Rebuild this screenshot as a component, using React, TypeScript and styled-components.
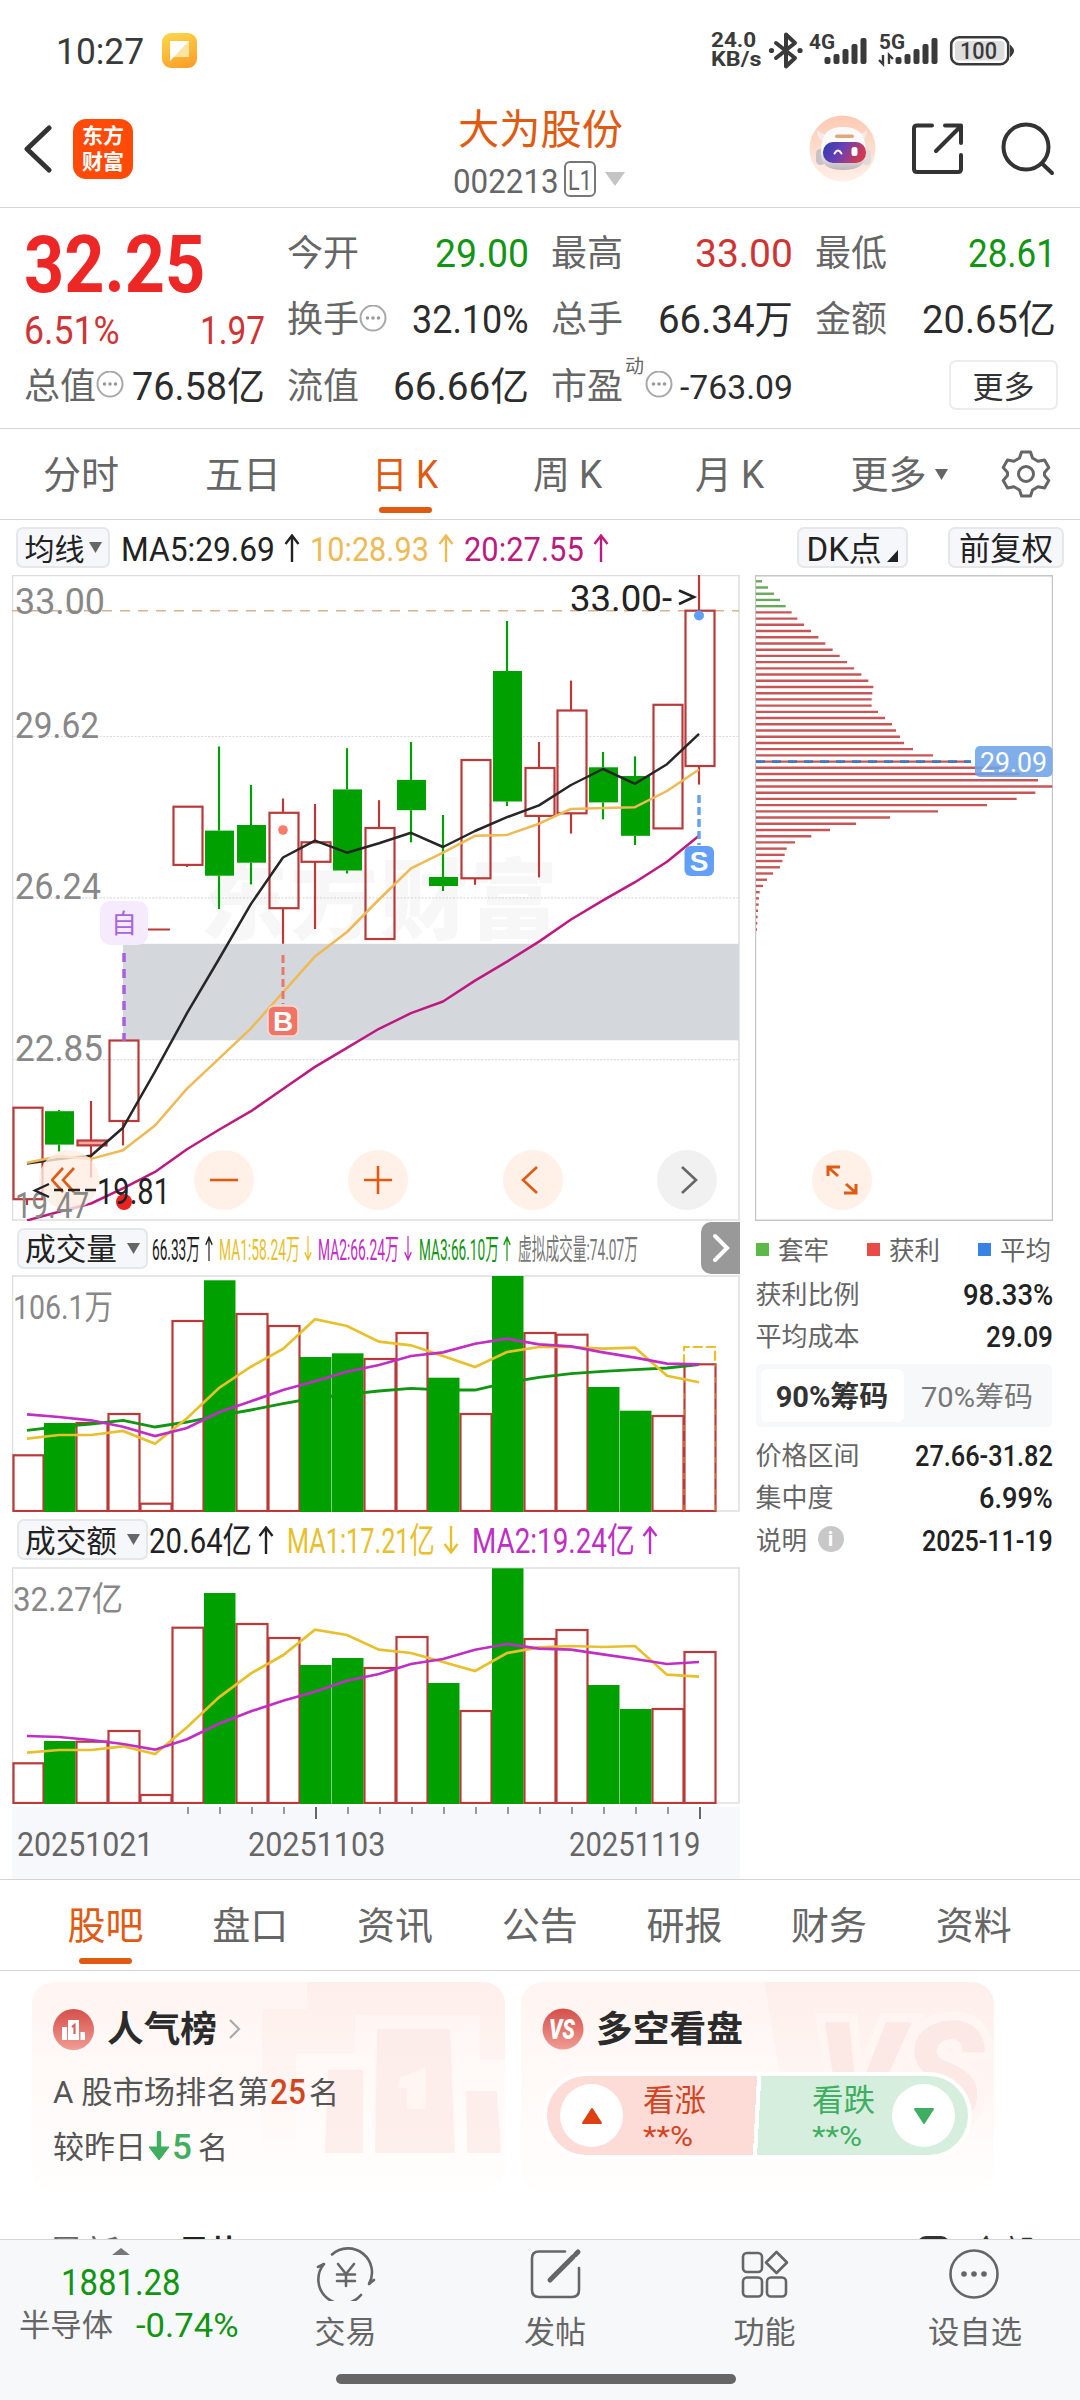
import React, { useLayoutEffect, useRef, useState } from "react";
import styled, { createGlobalStyle } from "styled-components";

const FONT = `Roboto, "Noto Sans CJK SC", sans-serif`;
const C = {
  orange: "#e05a12",
  red: "#cf3434",
  green: "#129512",
  ink: "#2c2c2c",
  grey: "#666",
  line: "#d3d4d6",
  chip: "#f6f7fa",
  candleRed: "#b93a38",
  candleGreen: "#00a000",
  ma5: "#262626",
  ma10: "#efb954",
  ma20: "#bd1a80",
  yellow: "#e8c02c",
  purple: "#c02fc4",
};

const Global = createGlobalStyle`
  html, body { margin: 0; padding: 0; background: #fff; }
  * { box-sizing: border-box; }
  button { font-family: inherit; border: 0; background: none; padding: 0; margin: 0; }
  svg { display: block; flex: none; }
`;

/* ---------- fitted text ---------- */
type TextProps = { $s: number; $c?: string; $b?: number; $ml?: number };
const FitBox = styled.span<TextProps>`
  display: inline-block;
  flex: none;
  overflow: visible;
  white-space: nowrap;
  line-height: 1.2;
  font-size: ${(p) => p.$s}px;
  color: ${(p) => p.$c || "inherit"};
  font-weight: ${(p) => p.$b || 400};
  margin-left: ${(p) => p.$ml || 0}px;
  transform: translateY(1.5px);
`;
const FitInner = styled.span`
  display: inline-block;
  transform-origin: 0 50%;
`;
function Fit({ w, s, c, b, ml, children }: { w: number; s: number; c?: string; b?: number; ml?: number; children: React.ReactNode }) {
  const ref = useRef<HTMLSpanElement>(null);
  const [k, setK] = useState(1);
  useLayoutEffect(() => {
    if (ref.current) setK(w / ref.current.offsetWidth);
  }, [w]);
  return (
    <FitBox $s={s} $c={c} $b={b} $ml={ml} style={{ width: w }}>
      <FitInner ref={ref} style={{ transform: `scaleX(${k})` }}>{children}</FitInner>
    </FitBox>
  );
}

/* ---------- page ---------- */
const Page = styled.div`
  width: 1080px;
  height: 2400px;
  display: flex;
  flex-direction: column;
  overflow: hidden;
  background: #fff;
  font-family: ${FONT};
  color: ${C.ink};
`;

/* ---------- status bar ---------- */
const StatusBar = styled.div`
  height: 97px;
  flex: none;
  display: flex;
  align-items: center;
  padding: 3px 63px 0 56px;
`;
const Spacer = styled.div`flex: 1;`;
const NoteIcon = styled.div`
  width: 35px;
  height: 35px;
  margin-left: 18px;
  border-radius: 9px;
  background: linear-gradient(160deg, #fbd94c, #fb9a26);
`;
const NetSpeed = styled.div`
  display: flex;
  flex-direction: column;
  height: 38px;
  > span { line-height: 19px; transform: none; }
`;

function StatusIcons() {
  return (
    <svg width="250" height="46" viewBox="768 26 250 46" fontFamily={FONT} fontWeight="700" fill="#3a3a3a">
      <path d="M777 42l19 15-9 8.500V33.500l9 8.500-19 15" fill="none" stroke="#3a3a3a" strokeWidth="4" strokeLinejoin="round" strokeLinecap="round" />
      <circle cx="772.500" cy="49.500" r="2.600" /><circle cx="801" cy="49.500" r="2.600" />
      <text x="810" y="48" fontSize="20" textLength="26" lengthAdjust="spacingAndGlyphs">4G</text>
      <text x="880" y="48" fontSize="20" textLength="26" lengthAdjust="spacingAndGlyphs">5G</text>
      {[825, 895].map((x, n) => (
        <g key={x}>
          {[7, 10, 15, 20, 26].map((h, i) => (
            <rect key={i} x={x + i * 9 + (n ? 1.5 : 0.5)} y={63 - h} width="6" height={h} rx="2" />
          ))}
        </g>
      ))}
      <path d="M884 54v9l-4-4M890 63v-9l4 4" fill="none" stroke="#3a3a3a" strokeWidth="2.400" />
      <rect x="952.200" y="36.200" width="57" height="27" rx="8" fill="#fff" stroke="#3a3a3a" strokeWidth="2.600" />
      <rect x="956" y="40" width="49.500" height="19.500" rx="4" fill="#dedede" />
      <path d="M1012 46q4 4 0 8z" stroke="#3a3a3a" strokeWidth="2" />
      <text x="961" y="58" fontSize="23" fontWeight="500" textLength="37" lengthAdjust="spacingAndGlyphs">100</text>
    </svg>
  );
}

/* ---------- header ---------- */
const Header = styled.header`
  height: 111px;
  flex: none;
  display: grid;
  grid-template-columns: 1fr 240px 1fr;
  border-bottom: 1.5px solid ${C.line};
`;
const HeaderSide = styled.div<{ $end?: boolean }>`
  display: flex;
  align-items: center;
  height: 102px;
  justify-content: ${(p) => (p.$end ? "flex-end" : "flex-start")};
  padding: ${(p) => (p.$end ? "1px 25px 0 0" : "1px 0 0 22px")};
`;
const BrandLogo = styled.div`
  width: 60px;
  height: 60px;
  margin-left: 21px;
  border-radius: 13px;
  background: #ff4a08;
  color: #fff;
  display: flex;
  flex-direction: column;
  align-items: center;
  justify-content: center;
  font: 700 21px/26px ${FONT};
`;
const TitleBlock = styled.div`
  display: flex;
  flex-direction: column;
  align-items: center;
  padding-top: 7px;
`;
const CodeRow = styled.div`
  display: flex;
  align-items: center;
  height: 38px;
  margin-top: 7px;
  margin-right: 2px;
`;
const LevelTag = styled.span`
  width: 32px;
  height: 36px;
  margin: 0 9px 0 5px;
  border: 2px solid #777;
  border-radius: 6px;
  display: flex;
  align-items: center;
  justify-content: center;
  color: #666;
`;

function Robot() {
  return (
    <svg width="67" height="67" viewBox="0 0 67 67">
      <defs>
        <linearGradient id="rb" x1="0" y1="0" x2="0" y2="1"><stop offset="0" stopColor="#fdc9b2" /><stop offset="1" stopColor="#fff0e8" /></linearGradient>
        <linearGradient id="rf" x1="0" y1="0" x2="1" y2=".3"><stop offset="0" stopColor="#2b3bb0" /><stop offset=".5" stopColor="#6a3fb4" /><stop offset="1" stopColor="#d23a52" /></linearGradient>
        <linearGradient id="rw" x1="0" y1="0" x2="0" y2="1"><stop offset=".5" stopColor="#fafafa" /><stop offset="1" stopColor="#bdb6ba" /></linearGradient>
      </defs>
      <circle cx="33.500" cy="33.500" r="33" fill="url(#rb)" />
      <path d="M8 15c0 6 2 10 8 12l6-8c-6 1-11-1-14-4zM58 15c0 6-2 10-7 12l-6-8c6 1 10-1 13-4z" fill="#f6e9e6" />
      <rect x="7" y="34" width="9" height="16" rx="4.500" fill="#c9c3c6" /><rect x="53" y="34" width="9" height="16" rx="4.500" fill="#e0dada" />
      <path d="M12 38C12 18 20 12 34 12s23 6 23 26c0 12-8 17-23 17s-22-5-22-17z" fill="url(#rw)" />
      <rect x="26" y="19.500" width="19" height="3.600" rx="1.800" fill="#e0a878" />
      <rect x="14" y="27" width="43" height="21" rx="10" fill="url(#rf)" />
      <path d="M25.500 38.500q3.500-6 7 0" fill="none" stroke="#fff" strokeWidth="2" strokeLinecap="round" />
      <rect x="42.500" y="32" width="6" height="9" rx="2.500" fill="#fff" />
    </svg>
  );
}

/* ---------- quote ---------- */
const Quote = styled.section`
  height: 221px;
  flex: none;
  display: grid;
  grid-template-columns: 241px 242px 242px 241px;
  column-gap: 22px;
  padding: 11px 0 0 24px;
  border-bottom: 1.5px solid ${C.line};
`;
const QuoteCol = styled.div`
  display: flex;
  flex-direction: column;
`;
const QuoteRow = styled.div<{ $h?: number }>`
  height: ${(p) => p.$h || 66.500}px;
  display: flex;
  align-items: center;
  justify-content: space-between;
`;
const QuoteCell = styled.div`
  display: flex;
  align-items: center;
`;
const PriceRow = styled.div`
  height: 88px;
  display: flex;
  align-items: center;
`;
const Sup = styled.span`
  align-self: flex-start;
  margin: -7px 1px 0 2px;
  height: 20px;
  line-height: 20px;
  font-size: 19px;
  color: ${C.grey};
`;
const MoreButton = styled.button`
  width: 109px;
  height: 50px;
  margin-left: auto;
  margin-right: -2px;
  border: 2px solid #ececec;
  border-radius: 7px;
  display: flex;
  align-items: center;
  justify-content: center;
`;
const Dots = () => (
  <svg width="28" height="28" viewBox="0 0 28 28">
    <circle cx="14" cy="13" r="12.500" fill="none" stroke="#a8a8a8" strokeWidth="2" />
    <g fill="#999"><circle cx="8.500" cy="13" r="1.800" /><circle cx="14" cy="13" r="1.800" /><circle cx="19.500" cy="13" r="1.800" /></g>
  </svg>
);

/* ---------- period tabs ---------- */
const PeriodTabs = styled.nav`
  height: 91px;
  flex: none;
  display: flex;
  align-items: center;
  border-bottom: 1.5px solid ${C.line};
  color: ${C.grey};
`;
const Tab = styled.button<{ $w: number; $on?: boolean }>`
  width: ${(p) => p.$w}px;
  flex: none;
  height: 100%;
  display: flex;
  align-items: center;
  justify-content: center;
  position: relative;
  color: ${(p) => (p.$on ? C.orange : C.grey)};
  &::after {
    content: "";
    display: ${(p) => (p.$on ? "block" : "none")};
    position: absolute;
    left: calc(50% - 26.5px);
    bottom: 6px;
    width: 53px;
    height: 6px;
    border-radius: 3px;
    background: ${C.orange};
  }
`;

/* ---------- indicators ---------- */
const IndicatorRow = styled.div<{ $h: number; $pl: number; $w?: number }>`
  width: ${(p) => (p.$w ? p.$w + "px" : "auto")};
  height: ${(p) => p.$h}px;
  flex: none;
  display: flex;
  align-items: center;
  padding-left: ${(p) => p.$pl}px;
  padding-right: 16px;
`;
const Chip = styled.button<{ $w: number }>`
  width: ${(p) => p.$w}px;
  height: 41px;
  flex: none;
  display: flex;
  align-items: center;
  justify-content: center;
  gap: 4px;
  border: 2px solid #e6e7ea;
  border-radius: 7px;
  background: ${C.chip};
  color: #222;
`;
const ChipGap = styled.span<{ $w: number }>`width: ${(p) => p.$w}px; flex: none;`;
const Tri = ({ w, h, c = "#666", up }: { w: number; h: number; c?: string; up?: boolean }) => (
  <svg width={w} height={h} viewBox="0 0 10 10" preserveAspectRatio="none"><path d={up ? "M5 0L10 10H0z" : "M0 0H10L5 10z"} fill={c} /></svg>
);
const ArrowBox = styled.span<{ $ml: number }>`margin-left: ${(p) => p.$ml}px; flex: none;`;
const Arrow = ({ c, down, w = 16, ml = 9, h = 28 }: { c: string; down?: boolean; w?: number; ml?: number; h?: number }) => (
  <ArrowBox $ml={ml}>
    <svg width={w} height={h} viewBox="0 0 16 28" preserveAspectRatio="none">
      <path d={down ? "M8 0V27M1.500 18L8 26.500 14.500 18" : "M8 28V1.500M1.500 10L8 1.500 14.500 10"} fill="none" stroke={c} strokeWidth="2.400" />
    </svg>
  </ArrowBox>
);

/* ---------- charts ---------- */
const ChartArea = styled.section`
  height: 1304px;
  flex: none;
  display: grid;
  grid-template-columns: 728px 298px;
  column-gap: 14.500px;
  padding-left: 12px;
`;
const ChartCol = styled.div`
  display: flex;
  flex-direction: column;
`;
const ChartFrame = styled.div`
  position: relative;
  height: 646px;
  flex: none;
`;
const ZoomBar = styled.div`
  position: absolute;
  left: 27px;
  top: 575px;
  display: flex;
  gap: 94.500px;
`;
const RoundButton = styled.button<{ $mute?: boolean }>`
  width: 60px;
  height: 60px;
  border-radius: 50%;
  display: flex;
  align-items: center;
  justify-content: center;
  background: ${(p) => (p.$mute ? "rgba(238,238,238,.85)" : "rgba(255,236,226,.8)")};
`;
const ExpandSlot = styled.div`
  position: absolute;
  left: 57px;
  top: 575px;
`;
const NextPane = styled.button`
  margin-left: auto;
  margin-right: -16px;
  width: 39px;
  height: 52px;
  flex: none;
  border-radius: 10px 0 0 10px;
  background: #999;
  display: flex;
  align-items: center;
  justify-content: center;
`;
const Axis = styled.div`
  margin-top: 3px;
  height: 72px;
  background: #f7f8fb;
`;

const X = (i: number) => 27 + 32 * i;
const pts = (ys: number[]) => ys.map((y, i) => `${X(i)},${y}`).join(" ");

type Candle = [string, number, number, number?, number?];
const candles: Candle[] = [
  ["r", 1107.700, 1199.200, 0, 1205], ["g", 1111.200, 1144.600, 1110, 1151.500], ["r", 1140.500, 1145.400, 1101, 1177.500],
  ["r", 1040.500, 1121, 0, 1145.400], ["r", 929, 929.500], ["r", 806.700, 864.900, 0, 867],
  ["g", 830.600, 875.700, 746.500, 909], ["g", 825, 862.700, 785, 884.400], ["r", 812.800, 908.200, 798.500, 943.800],
  ["r", 842.300, 861.800, 804, 929], ["g", 789.400, 870.500, 748.200, 873.500], ["r", 828, 939, 800.200],
  ["g", 779.900, 810.200, 742, 842.300], ["g", 877, 886, 815, 891], ["r", 760, 878.300, 0, 884.800],
  ["g", 671, 801.500, 621, 806], ["r", 768, 815.900, 742, 877.400], ["r", 710.500, 813.300, 680.600, 833.600],
  ["g", 767.300, 802.400, 752, 819.300], ["g", 776, 835.800, 756.400, 845], ["r", 704.800, 828.400], ["r", 610.700, 766, 575, 784.600],
];
const ma5 = [1163.600, 1158.900, 1155.800, 1127.700, 1071.700, 1013.200, 959, 903.900, 857.500, 840.600, 852.700, 843.200, 832.800, 847, 831, 817.200, 805.400, 785, 769, 783.800, 764.200, 733.900];
const ma10 = [1162.800, 1156.300, 1158.900, 1150.200, 1125.500, 1088.600, 1058.700, 1028.300, 992.300, 956.400, 932, 899.500, 868.300, 852.700, 835.800, 834.900, 823.700, 808.900, 808, 807.200, 791, 769.500];
const ma20 = [1220.400, 1211.800, 1203.500, 1188.400, 1171.900, 1149.300, 1129.800, 1111.200, 1089, 1066.900, 1047.900, 1028.800, 1013.200, 1001.500, 980.600, 961.600, 941.600, 919.500, 900.400, 882.200, 861.800, 835.800];
const falling = new Set([1, 6, 9, 10, 13, 15, 18, 19]);
const volTop = [1455.300, 1423, 1423, 1414, 1503.700, 1321, 1280.300, 1314, 1326, 1357, 1353.300, 1359, 1333, 1377.700, 1414, 1276, 1333, 1334.700, 1387, 1410.700, 1416, 1364.300];
const volY = [1438.700, 1435, 1435, 1431, 1443.700, 1418.300, 1388, 1366.700, 1349, 1319.300, 1326, 1341.700, 1345.300, 1356, 1367, 1352, 1347, 1347, 1348.700, 1347.700, 1375.700, 1382.300];
const volP = [1414.300, 1417, 1420.300, 1426.700, 1436, 1428, 1412.300, 1401.300, 1390, 1381.300, 1371.700, 1365, 1356, 1352.300, 1343.700, 1338.700, 1344.300, 1346.300, 1352.300, 1357.700, 1363.700, 1364.300];
const volG = [1430.300, 1426.700, 1424, 1420.300, 1427, 1422, 1415.700, 1410, 1403.700, 1398, 1394.300, 1391, 1388.300, 1390, 1390, 1382.700, 1377.300, 1373.700, 1371.300, 1369.700, 1368, 1364.700];
const amtTop = [1763.300, 1741, 1741.700, 1731, 1795, 1627.700, 1593, 1624, 1638, 1665, 1658, 1668, 1637, 1683, 1711, 1568.300, 1639, 1630, 1685, 1709, 1709, 1652];
const amtY = [1752.700, 1750, 1750, 1746.300, 1754, 1727.300, 1697.300, 1673.300, 1655.300, 1629.700, 1635, 1649.700, 1653, 1662, 1671, 1653, 1647.300, 1646, 1647, 1646, 1674.700, 1676.700];
const amtP = [1736, 1737, 1740, 1744, 1749.700, 1739.300, 1723.700, 1711.300, 1700.700, 1691.700, 1680.700, 1674, 1664, 1659, 1649.700, 1644, 1648.700, 1649.700, 1654.300, 1659, 1664, 1662];

function CandleChart() {
  const label = (t: string, y: number, w: number) => (
    <text key={t} x="15" y={y} fontSize="37" fill="#888" textLength={w} lengthAdjust="spacingAndGlyphs">{t}</text>
  );
  return (
    <svg width="728" height="646" viewBox="12 575 728 646" fontFamily={FONT}>
      <rect x="12.500" y="575.500" width="726.500" height="644.500" fill="none" stroke="#dedede" strokeWidth="1.500" />
      <text x="200" y="932" fontSize="88" fontWeight="900" fill="#f7f7f7" textLength="358">东方财富</text>
      {[736.500, 897.800, 1059.600].map((y) => <path key={y} d={`M12 ${y}H739`} stroke="#dcdcdc" strokeWidth="1.200" strokeDasharray="2 1.500" />)}
      <rect x="123" y="943.800" width="616" height="96.500" fill="#d4d7db" />
      <path d="M12 610.700H739" stroke="#d9b48a" strokeWidth="1.600" strokeDasharray="10 8" />
      {label("33.00", 613.5, 90)}{label("29.62", 737.5, 84)}{label("26.24", 898.5, 86)}{label("22.85", 1060.5, 88)}
      {candles.map(([k, t, b, hi, lo], i) => {
        const c = k === "g" ? C.candleGreen : C.candleRed;
        if (i === 4) return <path key={i} d="M141 929.500H170" stroke={c} strokeWidth="2" />;
        return (
          <g key={i} stroke={c} strokeWidth="2.200">
            {hi ? <path d={`M${X(i)} ${hi}V${t}`} /> : null}
            {lo ? <path d={`M${X(i)} ${b}V${lo}`} /> : null}
            {k === "g" ? <rect x={X(i) - 14} y={t} width="29" height={b - t} fill={c} stroke="none" /> : <rect x={X(i) - 13.500} y={t} width="29" height={b - t} fill={i === 2 ? "#f3a59f" : "none"} />}
          </g>
        );
      })}
      <g fill="none" strokeWidth="2.500" strokeLinejoin="round">
        <polyline points={pts(ma5)} stroke={C.ma5} />
        <polyline points={pts(ma10)} stroke={C.ma10} />
        <polyline points={pts(ma20)} stroke={C.ma20} />
      </g>
      <text x="570" y="611" fontSize="37" fill="#222" textLength="102" lengthAdjust="spacingAndGlyphs">33.00-</text>
      <path d="M679 581.500L694 588 679 595" transform="translate(0 9)" fill="none" stroke="#222" strokeWidth="2.600" />
      <path d="M124 953V1041" stroke="#a65fe0" strokeWidth="3.500" strokeDasharray="9 7" />
      <rect x="100" y="901" width="48" height="44" rx="10" fill="#f5ebfd" />
      <text x="111" y="933" fontSize="26" fill="#a866dc">自</text>
      <path d="M283 955V1004" stroke="#e5776d" strokeWidth="3" strokeDasharray="8 4" />
      <circle cx="283" cy="830" r="4.800" fill="#f97c6c" />
      <rect x="268" y="1006" width="30" height="30" rx="6" fill="#ef7567" stroke="#ffd8d0" strokeWidth="1.500" />
      <text x="283" y="1031" fontSize="28" fontFamily='"Liberation Sans", sans-serif' fontWeight="700" fill="#fff" textAnchor="middle">B</text>
      <path d="M699 795V845" stroke="#68a2ec" strokeWidth="3.500" strokeDasharray="8 4" />
      <circle cx="699" cy="615.500" r="5" fill="#5f9ff5" />
      <rect x="684.500" y="846" width="29.500" height="30" rx="6" fill="#62a0f7" />
      <text x="699" y="871" fontSize="28" fontFamily='"Liberation Sans", sans-serif' fontWeight="700" fill="#fff" textAnchor="middle">S</text>
      <circle cx="124" cy="1202" r="8" fill="#ea2222" />
    </svg>
  );
}
const LowMark = () => (
  <svg width="160" height="50" viewBox="12 1170 160 50" fontFamily={FONT}>
    <text x="15" y="1217.500" fontSize="37" fill="#888" textLength="74" lengthAdjust="spacingAndGlyphs">19.47</text>
    <path d="M49 1184L35 1190.500 49 1197M54 1190H63M68 1190H80M85 1190H96" fill="none" stroke="#222" strokeWidth="2.400" />
    <text x="97" y="1203.500" fontSize="36" fill="#222" textLength="73" lengthAdjust="spacingAndGlyphs">19.81</text>
  </svg>
);
const LowSlot = styled.div`
  position: absolute;
  left: 0;
  top: 595px;
`;

function BarChart({ top, tops, base, label, lw, lines, ghost }: { top: number; tops: number[]; base: number; label: string; lw: number; lines: [string, number[]][]; ghost?: number }) {
  return (
    <svg width="728" height="237" viewBox={`12 ${top} 728 237`} fontFamily={FONT}>
      <rect x="12.500" y={top + 1} width="726.500" height="235" fill="none" stroke="#dedede" strokeWidth="1.500" />
      <text x="13" y={top + 44} fontSize="34" fill="#888" textLength={lw} lengthAdjust="spacingAndGlyphs">{label}</text>
      {ghost ? <path d={`M684 ${tops[21]}V${ghost}H715V${tops[21]}`} fill="none" stroke={C.yellow} strokeWidth="2.200" strokeDasharray="10 3" /> : null}
      {tops.map((t, i) =>
        falling.has(i) ? null : (
          <rect key={i} x={X(i) - (i ? 14.5 : 13.5)} y={t} width={i ? 31 : 30} height={base - t} fill="#fff" stroke={C.candleRed} strokeWidth="2.200" />
        )
      )}
      {ghost ? <path d={`M684 ${base}V${tops[21]}M715 ${base}V${tops[21]}`} stroke={C.yellow} strokeWidth="2" strokeDasharray="6 10" opacity=".35" /> : null}
      {lines.filter((l) => l[0] === C.green).map(([c, ys]) => <polyline key={c} points={pts(ys)} fill="none" stroke={c} strokeWidth="2.800" />)}
      {tops.map((t, i) => (falling.has(i) ? <rect key={i} x={X(i) - 15} y={t} width="31.500" height={base - t + 1} fill={C.candleGreen} /> : null))}
      {lines.filter((l) => l[0] !== C.green).map(([c, ys]) => <polyline key={c} points={pts(ys)} fill="none" stroke={c} strokeWidth="2.700" />)}
    </svg>
  );
}

const chipEnds = [66, 84, 102, 120, 137, 155, 172, 192, 213, 235, 256, 278, 299, 321, 342, 364, 385, 400, 397, 395, 395, 414, 435, 456, 468, 480, 492, 519, 579, 693, 783, 838, 894, 937, 886, 830, 741, 594, 450, 348, 270, 214, 165, 140, 134, 127, 120, 99, 81, 69, 59, 57, 56, 54, 53, 52, 51];
function ChipProfile() {
  return (
    <svg width="298" height="646" viewBox="755 575 298 646" fontFamily={FONT}>
      <rect x="755.500" y="575.800" width="297" height="644.500" fill="none" stroke="#c6c6c6" strokeWidth="1.500" />
      {chipEnds.map((e, i) => (
        <path key={i} d={`M756 ${581.300 + i * 6.217}H${740 + e / 3}`} stroke={i < 5 ? "#67a85a" : "#c95656"} strokeWidth="2.400" />
      ))}
      <path d="M756 761.600H971" stroke="#3f7ac0" strokeWidth="2.600" strokeDasharray="9 7" />
      <rect x="975" y="746" width="77.500" height="31" rx="5" fill="#6ea3e8" fillOpacity=".88" />
      <text x="980" y="771.500" fontSize="27" fill="#fff" textLength="67" lengthAdjust="spacingAndGlyphs">29.09</text>
    </svg>
  );
}

const DateLabels = styled.div`
  display: flex;
  color: ${C.grey};
`;

/* ---------- chip info ---------- */
const Legend = styled.div`
  height: 51px;
  display: flex;
  align-items: center;
  justify-content: space-between;
  padding: 6px 2px 0 1px;
`;
const LegendItem = styled.div<{ $c: string }>`
  display: flex;
  align-items: center;
  gap: 9px;
  &::before { content: ""; width: 13px; height: 13px; background: ${(p) => p.$c}; }
`;
const InfoRow = styled.div`
  height: 42.500px;
  display: flex;
  align-items: center;
  padding-left: 1px;
`;
const InfoBadge = styled.span`
  width: 26px;
  height: 26px;
  margin-left: 11px;
  border-radius: 50%;
  background: #c8c8c8;
  color: #fff;
  font: 700 21px/26px ${FONT};
  text-align: center;
`;
const Segment = styled.div`
  margin: 7px 0 6px 1px;
  height: 63px;
  width: 296px;
  padding: 5px;
  border-radius: 5px;
  background: #f7f8fa;
  display: grid;
  grid-template-columns: 143px 143px;
`;
const SegmentItem = styled.button<{ $on?: boolean }>`
  border-radius: 6px;
  background: ${(p) => (p.$on ? "#fff" : "transparent")};
  color: ${(p) => (p.$on ? "#333" : "#777")};
  display: flex;
  align-items: center;
  justify-content: center;
`;
const Info = ({ l, lw, v, vw, badge }: { l: string; lw: number; v: string; vw: number; badge?: boolean }) => (
  <InfoRow>
    <Fit w={lw} s={26} c={C.grey}>{l}</Fit>
    {badge ? <InfoBadge>i</InfoBadge> : null}
    <Spacer />
    <Fit w={vw} s={29} b={500} c="#222">{v}</Fit>
  </InfoRow>
);

/* ---------- sections below ---------- */
const SectionTabs = styled.nav`
  height: 92px;
  flex: none;
  display: flex;
  align-items: center;
  padding-left: 33px;
  border-top: 1.5px solid ${C.line};
  border-bottom: 1.5px solid ${C.line};
`;
const Cards = styled.section`
  flex: none;
  display: flex;
  gap: 16px;
  padding: 11px 0 0 32px;
`;
const Card = styled.article`
  position: relative;
  width: 473px;
  height: 210px;
  border-radius: 22px;
  overflow: hidden;
  background: linear-gradient(#fff5f2, #fffaf8 50%, #fffefd);
  padding: 26px 0 0 21px;
`;
const Watermark = styled.div`
  position: absolute;
  right: 0;
  top: 0;
`;
const CardHead = styled.div`
  position: relative;
  height: 42px;
  display: flex;
  align-items: center;
`;
const CardLine = styled.div<{ $mt: number }>`
  position: relative;
  height: 42px;
  margin-top: ${(p) => p.$mt}px;
  display: flex;
  align-items: center;
  color: #555;
`;
const VotePill = styled.div`
  position: relative;
  width: 429px;
  height: 87px;
  margin: 22px 0 0 1px;
  border: 4px solid #fff;
  border-radius: 44px;
  overflow: hidden;
  background: linear-gradient(93deg, #fddcd8 0 49.4%, #fff 49.4% 50.4%, #d6eedd 50.4%);
  display: flex;
  align-items: center;
  padding: 0 13px;
`;
const VoteDot = styled.div`
  width: 63px;
  height: 63px;
  flex: none;
  border-radius: 50%;
  background: #fff;
  display: flex;
  align-items: center;
  justify-content: center;
`;
const VoteText = styled.div<{ $ml: number; $c: string }>`
  margin-left: ${(p) => p.$ml}px;
  color: ${(p) => p.$c};
  display: flex;
  flex-direction: column;
  gap: 2px;
`;
const Feed = styled.div`
  margin-top: auto;
  height: 8px;
  flex: none;
  overflow: hidden;
  display: flex;
  align-items: flex-start;
  padding-left: 48px;
`;
const FeedIcon = styled.div`
  margin: 5px 20px 0 auto;
  width: 33px;
  height: 33px;
  border: 4px solid #333;
  border-radius: 9px;
  background: #333;
`;
const FeedText = styled.div<{ $r?: number }>`
  display: flex;
  flex: none;
  padding-right: ${(p) => p.$r || 0}px;
`;

const BottomBar = styled.footer`
  height: 161px;
  flex: none;
  display: grid;
  grid-template-rows: 123px 1fr;
  background: #f7f8fa;
  border-top: 1.5px solid ${C.line};
`;
const BottomItems = styled.div`
  display: grid;
  grid-template-columns: 242px 207px 212px 207px 212px;
`;
const IndexCell = styled.div`
  display: flex;
  flex-direction: column;
  align-items: center;
  padding-top: 8px;
`;
const IndexValue = styled.div`
  display: flex;
  margin-top: 4px;
`;
const IndexLine = styled.div`
  display: flex;
  align-items: center;
  width: 242px;
  padding-left: 19px;
`;
const NavItem = styled.button`
  display: flex;
  flex-direction: column;
  align-items: center;
  padding-top: 7px;
  gap: 11px;
`;
const HomeIndicator = styled.div`
  width: 400px;
  height: 10px;
  margin: 11px 0 0 336px;
  border-radius: 5px;
  background: #666;
`;
const g = { fill: "none", stroke: "#666", strokeWidth: 2.600, strokeLinecap: "round" as const, strokeLinejoin: "round" as const };

export default function App() {
  return (
    <>
      <Global />
      <Page>
        <StatusBar>
          <Fit w={88} s={37} c="#3a3a3a">10:27</Fit>
          <NoteIcon><svg width="35" height="35" viewBox="0 0 35 35"><path d="M8 8h19v16H8z" fill="#fbe3a0" /><path d="M8 8h19L8 28z" fill="#fff" /></svg></NoteIcon>
          <Spacer />
          <NetSpeed>
            <Fit w={45} s={21} b={700} c="#3a3a3a">24.0</Fit>
            <Fit w={50} s={21} b={700} c="#3a3a3a">KB/s</Fit>
          </NetSpeed>
          <ChipGap $w={6} />
          <StatusIcons />
        </StatusBar>

        <Header>
          <HeaderSide>
            <svg width="30" height="50" viewBox="0 0 30 50"><path d="M27 4L5 25 27 46" fill="none" stroke="#333" strokeWidth="5" strokeLinecap="round" strokeLinejoin="round" /></svg>
            <BrandLogo><span>东方</span><span>财富</span></BrandLogo>
          </HeaderSide>
          <TitleBlock>
            <Fit w={165} s={41} c={C.orange}>大为股份</Fit>
            <CodeRow>
              <Fit w={106} s={34} c={C.grey}>002213</Fit>
              <LevelTag><Fit w={24} s={27}>L1</Fit></LevelTag>
              <Tri w={20} h={14} c="#c4c4c4" />
            </CodeRow>
          </TitleBlock>
          <HeaderSide $end>
            <Robot />
            <ChipGap $w={35} />
            <svg width="54" height="54" viewBox="0 0 54 54"><path d="M21 3.500H6Q3 3.500 3 6.500V47q0 3 3 3H47q3 0 3-3V33M34 3.500H50V21M49 5L25 29" fill="none" stroke="#333" strokeWidth="4" strokeLinecap="round" strokeLinejoin="round" /></svg>
            <ChipGap $w={36} />
            <svg width="54" height="54" viewBox="0 0 54 54"><circle cx="25" cy="25" r="22.500" fill="none" stroke="#333" strokeWidth="4" /><path d="M41 41.500L51 51" stroke="#333" strokeWidth="4" strokeLinecap="round" /></svg>
          </HeaderSide>
        </Header>

        <Quote>
          <QuoteCol>
            <PriceRow><Fit w={181} s={79} b={700} c="#ed2626">32.25</Fit></PriceRow>
            <QuoteRow $h={45}><Fit w={96} s={39} c={C.red}>6.51%</Fit><Fit w={65} s={39} c={C.red}>1.97</Fit></QuoteRow>
            <QuoteRow><QuoteCell><Fit w={72} s={36} c={C.grey}>总值</Fit><Dots /></QuoteCell><Fit w={133} s={39}>76.58亿</Fit></QuoteRow>
          </QuoteCol>
          <QuoteCol>
            <QuoteRow><Fit w={72} s={36} c={C.grey}>今开</Fit><Fit w={94} s={39} c={C.green}>29.00</Fit></QuoteRow>
            <QuoteRow><QuoteCell><Fit w={72} s={36} c={C.grey}>换手</Fit><Dots /></QuoteCell><Fit w={117} s={39}>32.10%</Fit></QuoteRow>
            <QuoteRow><Fit w={72} s={36} c={C.grey}>流值</Fit><Fit w={136} s={39}>66.66亿</Fit></QuoteRow>
          </QuoteCol>
          <QuoteCol>
            <QuoteRow><Fit w={72} s={36} c={C.grey}>最高</Fit><Fit w={98} s={39} c={C.red}>33.00</Fit></QuoteRow>
            <QuoteRow><Fit w={72} s={36} c={C.grey}>总手</Fit><Fit w={135} s={39}>66.34万</Fit></QuoteRow>
            <QuoteRow><QuoteCell><Fit w={72} s={36} c={C.grey}>市盈</Fit><Sup>动</Sup><Dots /></QuoteCell><Fit w={113} s={34}>-763.09</Fit></QuoteRow>
          </QuoteCol>
          <QuoteCol>
            <QuoteRow><Fit w={72} s={36} c={C.grey}>最低</Fit><Fit w={88} s={39} c={C.green}>28.61</Fit></QuoteRow>
            <QuoteRow><Fit w={72} s={36} c={C.grey}>金额</Fit><Fit w={134} s={39}>20.65亿</Fit></QuoteRow>
            <QuoteRow><MoreButton><Fit w={62} s={31} c="#333">更多</Fit></MoreButton></QuoteRow>
          </QuoteCol>
        </Quote>

        <PeriodTabs>
          <Tab $w={162}><Fit w={76} s={38}>分时</Fit></Tab>
          <Tab $w={162}><Fit w={76} s={38}>五日</Fit></Tab>
          <Tab $w={162} $on><Fit w={66} s={38}>日 K</Fit></Tab>
          <Tab $w={162}><Fit w={69} s={38}>周 K</Fit></Tab>
          <Tab $w={162}><Fit w={69} s={38}>月 K</Fit></Tab>
          <Tab $w={172}><Fit w={76} s={38} ml={6}>更多</Fit><ChipGap $w={8} /><Tri w={13} h={11} /></Tab>
          <ChipGap $w={19} />
          <svg width="50" height="50" viewBox="0 0 50 50">
            <path d="M20.500 3h9l2 6 5.500 3.200 6.500-1.200 4.300 7.500-4.300 5v3l4.300 5-4.300 7.500-6.500-1.200-5.500 3.200-2 6h-9l-2-6-5.500-3.200-6.500 1.200L2.200 31.500l4.300-5v-3l-4.300-5L6.500 11l6.500 1.200L18.500 9z" fill="none" stroke="#666" strokeWidth="3" strokeLinejoin="round" />
            <circle cx="25" cy="25" r="7.500" fill="none" stroke="#666" strokeWidth="3" />
          </svg>
        </PeriodTabs>

        <IndicatorRow $h={55} $pl={16}>
          <Chip $w={94}><Fit w={60} s={30}>均线</Fit><Tri w={13} h={11} /></Chip>
          <Fit ml={11} w={154} s={34} c="#222">MA5:29.69</Fit><Arrow c="#222" />
          <Fit ml={10} w={119} s={34} c={C.ma10}>10:28.93</Fit><Arrow c={C.ma10} />
          <Fit ml={10} w={120} s={34} c={C.ma20}>20:27.55</Fit><Arrow c={C.ma20} />
          <Spacer />
          <Chip $w={111}><Fit w={75} s={33}>DK点</Fit><svg width="13" height="30" viewBox="0 0 13 30"><path d="M12 17v12H1z" fill="#222" /></svg></Chip>
          <ChipGap $w={40} />
          <Chip $w={116}><Fit w={94} s={32}>前复权</Fit></Chip>
        </IndicatorRow>

        <ChartArea>
          <ChartCol>
            <ChartFrame>
              <CandleChart />
              <ZoomBar>
                <RoundButton><svg width="36" height="28" viewBox="4 0 36 28"><path d="M16 2L5 14 16 26M27 2L16 14 27 26" fill="none" stroke={C.orange} strokeWidth="2.600" /></svg></RoundButton>
                <RoundButton><svg width="30" height="30" viewBox="0 0 30 30"><path d="M1 15H29" stroke={C.orange} strokeWidth="2.600" /></svg></RoundButton>
                <RoundButton><svg width="30" height="30" viewBox="0 0 30 30"><path d="M1 15H29M15 1V29" stroke={C.orange} strokeWidth="2.600" /></svg></RoundButton>
                <RoundButton><svg width="28" height="28" viewBox="0 0 28 28"><path d="M18 1L4 14 18 27" fill="none" stroke={C.orange} strokeWidth="2.600" /></svg></RoundButton>
                <RoundButton $mute><svg width="28" height="28" viewBox="0 0 28 28"><path d="M9 1L23 14 9 27" fill="none" stroke="#666" strokeWidth="2.600" /></svg></RoundButton>
              </ZoomBar>
              <LowSlot><LowMark /></LowSlot>
            </ChartFrame>

            <IndicatorRow $h={54} $pl={4.500} $w={728}>
              <Chip $w={131}><Fit w={92} s={31}>成交量</Fit><ChipGap $w={2} /><Tri w={13} h={11} /></Chip>
              <Fit ml={4} w={48} s={29} c="#222">66.33万</Fit><Arrow c="#222" w={8} ml={5} h={25} />
              <Fit ml={6} w={81} s={29} c={C.yellow}>MA1:58.24万</Fit><Arrow c={C.yellow} down w={8} ml={4} h={25} />
              <Fit ml={6} w={81} s={29} c={C.purple}>MA2:66.24万</Fit><Arrow c={C.purple} down w={8} ml={5} h={25} />
              <Fit ml={7} w={80} s={29} c={C.green}>MA3:66.10万</Fit><Arrow c={C.green} w={8} ml={4} h={25} />
              <Fit ml={7} w={120} s={29} c="#777">虚拟成交量:74.07万</Fit>
              <NextPane><svg width="18" height="30" viewBox="0 0 18 30"><path d="M3 3L15 15 3 27" fill="none" stroke="#fff" strokeWidth="4" strokeLinecap="round" /></svg></NextPane>
            </IndicatorRow>
            <BarChart top={1275} tops={volTop} base={1511} label="106.1万" lw={100} ghost={1347} lines={[[C.green, volG], [C.yellow, volY], [C.purple, volP]]} />

            <IndicatorRow $h={55} $pl={4.500} $w={728}>
              <Chip $w={131}><Fit w={92} s={31}>成交额</Fit><ChipGap $w={2} /><Tri w={13} h={11} /></Chip>
              <Fit ml={1} w={103} s={35} c="#222">20.64亿</Fit><Arrow c="#222" ml={6} />
              <Fit ml={13} w={148} s={35} c={C.yellow}>MA1:17.21亿</Fit><Arrow c={C.yellow} down ml={8} />
              <Fit ml={13} w={163} s={35} c={C.purple}>MA2:19.24亿</Fit><Arrow c={C.purple} ml={7} />
            </IndicatorRow>
            <BarChart top={1567} tops={amtTop} base={1803} label="32.27亿" lw={110} lines={[[C.yellow, amtY], [C.purple, amtP]]} />

            <Axis>
              <svg width="728" height="16" viewBox="12 1807 728 16">
                {Array.from({ length: 17 }, (_, n) => n + 5).map((i) => {
                  const major = i === 9 || i === 21;
                  return <path key={i} d={`M${X(i) + 1} 1807V${major ? 1819 : 1814}`} stroke={major ? "#666" : "#999"} strokeWidth="2" />;
                })}
              </svg>
              <DateLabels>
                <Fit ml={5} w={136} s={33}>20251021</Fit>
                <Fit ml={95} w={137} s={33}>20251103</Fit>
                <Fit ml={184} w={131} s={33}>20251119</Fit>
              </DateLabels>
            </Axis>
          </ChartCol>

          <ChartCol>
            <ChartFrame>
              <ChipProfile />
              <ExpandSlot>
                <RoundButton><svg width="34" height="34" viewBox="0 0 34 34"><path d="M3 13V4H15M4 5L13 13M31 21V30H19M30 29L21 21" fill="none" stroke={C.orange} strokeWidth="3" /></svg></RoundButton>
              </ExpandSlot>
            </ChartFrame>
            <Legend>
              <LegendItem $c="#5cb848"><Fit w={51} s={26} c={C.grey}>套牢</Fit></LegendItem>
              <LegendItem $c="#e94b49"><Fit w={51} s={26} c={C.grey}>获利</Fit></LegendItem>
              <LegendItem $c="#3882e4"><Fit w={51} s={26} c={C.grey}>平均</Fit></LegendItem>
            </Legend>
            <CostInfo />
          </ChartCol>
        </ChartArea>

        <SectionTabs>
          <Tab $w={145} $on><Fit w={76} s={38}>股吧</Fit></Tab>
          {["盘口", "资讯", "公告", "研报", "财务", "资料"].map((t) => <Tab key={t} $w={144.700}><Fit w={76} s={38}>{t}</Fit></Tab>)}
        </SectionTabs>

        <Cards>
          <Card>
            <Watermark>
              <svg width="250" height="210" viewBox="255 1982 250 210">
                <defs><linearGradient id="wm" x1="0" y1="0" x2="0" y2="1"><stop offset="0" stopColor="#fdebe8" /><stop offset=".85" stopColor="#fdebe8" stopOpacity="0" /></linearGradient></defs>
                <path d="M307 1982H505V2060H480V2015H355V2053H296V2192H262V2009H307z" fill="url(#wm)" opacity=".6" />
                <path d="M328 2070H363V2153H325z M377 2029H450L455 2153H375z M466 2091H497L501 2153H467z" fill="#fce6e3" opacity=".6" />
                <path d="M400 2078L426 2067V2109H407V2088H398z" fill="#fff6f4" />
              </svg>
            </Watermark>
            <CardHead>
              <svg width="41" height="41" viewBox="0 0 41 41">
                <defs><linearGradient id="ic" x1="0" y1="0" x2="0" y2="1"><stop offset="0" stopColor="#d64f49" /><stop offset="1" stopColor="#f09c94" /></linearGradient></defs>
                <circle cx="20.500" cy="20.500" r="20.500" fill="url(#ic)" />
                <path d="M9 18h5v13H9zM15 11h11v20H15zM27.500 23H32v8h-4.500z" fill="#fff" />
                <path d="M19 18l2.500-2v9" fill="none" stroke="#da5f58" strokeWidth="2.200" />
              </svg>
              <Fit ml={13} w={110} s={36} b={700} c="#2b2b2b">人气榜</Fit>
              <ChipGap $w={11} />
              <svg width="14" height="22" viewBox="0 0 14 22"><path d="M2 2L11 11 2 20" fill="none" stroke="#aaa" strokeWidth="2.200" /></svg>
            </CardHead>
            <CardLine $mt={20}>
              <Fit w={216} s={31}>A 股市场排名第</Fit><Fit ml={1} w={36} s={35} b={500} c="#d2451f">25</Fit><Fit ml={3} w={30} s={30}>名</Fit>
            </CardLine>
            <CardLine $mt={13}>
              <Fit w={93} s={31}>较昨日</Fit>
              <ChipGap $w={2} />
              <svg width="22" height="30" viewBox="0 0 22 30"><path d="M11 2V20" stroke="#3fae60" strokeWidth="4.500" strokeLinecap="round" /><path d="M1 16H21L11 29z" fill="#3fae60" stroke="#3fae60" strokeLinejoin="round" /></svg>
              <Fit ml={2} w={20} s={35} b={500} c="#3fae60">5</Fit><Fit ml={6} w={30} s={30}>名</Fit>
            </CardLine>
          </Card>
          <Card>
            <Watermark>
              <svg width="250" height="210" viewBox="744 1982 250 210" fontFamily={FONT}>
                <path d="M764 1982H994V2192H800z" fill="url(#wm)" opacity=".6" />
                <text x="816" y="2125" fontSize="145" fontWeight="900" fontStyle="italic" fill="#fce8e5" stroke="#fff6f3" strokeWidth="18" paintOrder="stroke" textLength="168" lengthAdjust="spacingAndGlyphs">VS</text>
              </svg>
            </Watermark>
            <CardHead>
              <svg width="42" height="42" viewBox="0 0 42 42" fontFamily={FONT}>
                <circle cx="21" cy="21" r="20.500" fill="url(#ic)" />
                <text x="7" y="31" fontSize="27" fontWeight="900" fontStyle="italic" fill="#fff" textLength="26" lengthAdjust="spacingAndGlyphs">VS</text>
              </svg>
              <Fit ml={12} w={147} s={36} b={700} c="#2b2b2b">多空看盘</Fit>
            </CardHead>
            <VotePill>
              <VoteDot><svg width="22" height="18" viewBox="0 0 22 18"><path d="M11 2L20 16H2z" fill="#df4012" stroke="#df4012" strokeWidth="2" strokeLinejoin="round" /></svg></VoteDot>
              <VoteText $ml={20} $c="#d2451f"><Fit w={63} s={31}>看涨</Fit><Fit w={50} s={27}>**%</Fit></VoteText>
              <VoteText $ml={106} $c="#3fae60"><Fit w={63} s={31}>看跌</Fit><Fit w={50} s={27}>**%</Fit></VoteText>
              <Spacer />
              <VoteDot><svg width="22" height="18" viewBox="0 0 22 18"><path d="M2 2H20L11 16z" fill="#3fae60" stroke="#3fae60" strokeWidth="2" strokeLinejoin="round" /></svg></VoteDot>
            </VotePill>
          </Card>
        </Cards>

        <Feed>
          <FeedText><Fit w={72} s={34} c="#666">最新</Fit></FeedText>
          <FeedText><Fit ml={58} w={64} s={34} b={700} c="#222">最热</Fit></FeedText>
          <FeedIcon />
          <FeedText $r={46}><Fit w={64} s={34} c="#333">全部</Fit></FeedText>
        </Feed>

        <BottomBar>
          <BottomItems>
            <IndexCell>
              <Tri w={18} h={7} c="#777" up />
              <IndexValue><Fit w={120} s={37} c={C.green}>1881.28</Fit></IndexValue>
              <IndexLine><Fit w={94} s={31} c={C.grey}>半导体</Fit><Fit ml={23} w={103} s={34} c={C.green}>-0.74%</Fit></IndexLine>
            </IndexCell>
            <NavItem>
              <svg width="60" height="54" viewBox="316 2247 60 54">
                <path d="M332 2254.500A24 24 0 0 1 369 2284l5-4M361 2295A24 24 0 0 1 324 2264l-6 3" {...g} />
                <path d="M338 2264l8 10 8-10M346 2274V2286M337 2274.500H355M337 2281H355" {...g} />
              </svg>
              <Fit w={62} s={31} c={C.grey}>交易</Fit>
            </NavItem>
            <NavItem>
              <svg width="54" height="54" viewBox="528 2247 54 54">
                <path d="M565 2251.500H539q-7 0-7 7V2290q0 7 7 7H572q7 0 7-7V2268" {...g} />
                <path d="M550 2280L573 2257" stroke="#666" strokeWidth="5" strokeLinecap="round" /><path d="M575.500 2254.500L578 2252" stroke="#666" strokeWidth="5" strokeLinecap="round" />
              </svg>
              <Fit w={62} s={31} c={C.grey}>发帖</Fit>
            </NavItem>
            <NavItem>
              <svg width="54" height="54" viewBox="738 2247 54 54">
                <rect x="743" y="2253" width="19" height="19" rx="4" {...g} /><rect x="743" y="2277.500" width="19" height="19" rx="4" {...g} /><rect x="767" y="2277.500" width="19" height="19" rx="4" {...g} />
                <path d="M776.500 2252L787 2262.500 776.500 2273 766 2262.500z" {...g} />
              </svg>
              <Fit w={62} s={31} c={C.grey}>功能</Fit>
            </NavItem>
            <NavItem>
              <svg width="54" height="54" viewBox="0 0 54 54"><circle cx="27" cy="27" r="23.500" {...g} /><g fill="#666"><circle cx="17" cy="27" r="2.800" /><circle cx="27" cy="27" r="2.800" /><circle cx="37" cy="27" r="2.800" /></g></svg>
              <Fit w={94} s={31} c={C.grey}>设自选</Fit>
            </NavItem>
          </BottomItems>
          <HomeIndicator />
        </BottomBar>
      </Page>
    </>
  );
}

function CostInfo() {
  return (
    <>
      <Info l="获利比例" lw={104} v="98.33%" vw={90} />
      <Info l="平均成本" lw={104} v="29.09" vw={67} />
      <Segment>
        <SegmentItem $on><Fit w={113} s={29} b={700}>90%筹码</Fit></SegmentItem>
        <SegmentItem><Fit w={112} s={28}>70%筹码</Fit></SegmentItem>
      </Segment>
      <Info l="价格区间" lw={104} v="27.66-31.82" vw={138} />
      <Info l="集中度" lw={78} v="6.99%" vw={74} />
      <Info l="说明" lw={51} v="2025-11-19" vw={131} badge />
    </>
  );
}
